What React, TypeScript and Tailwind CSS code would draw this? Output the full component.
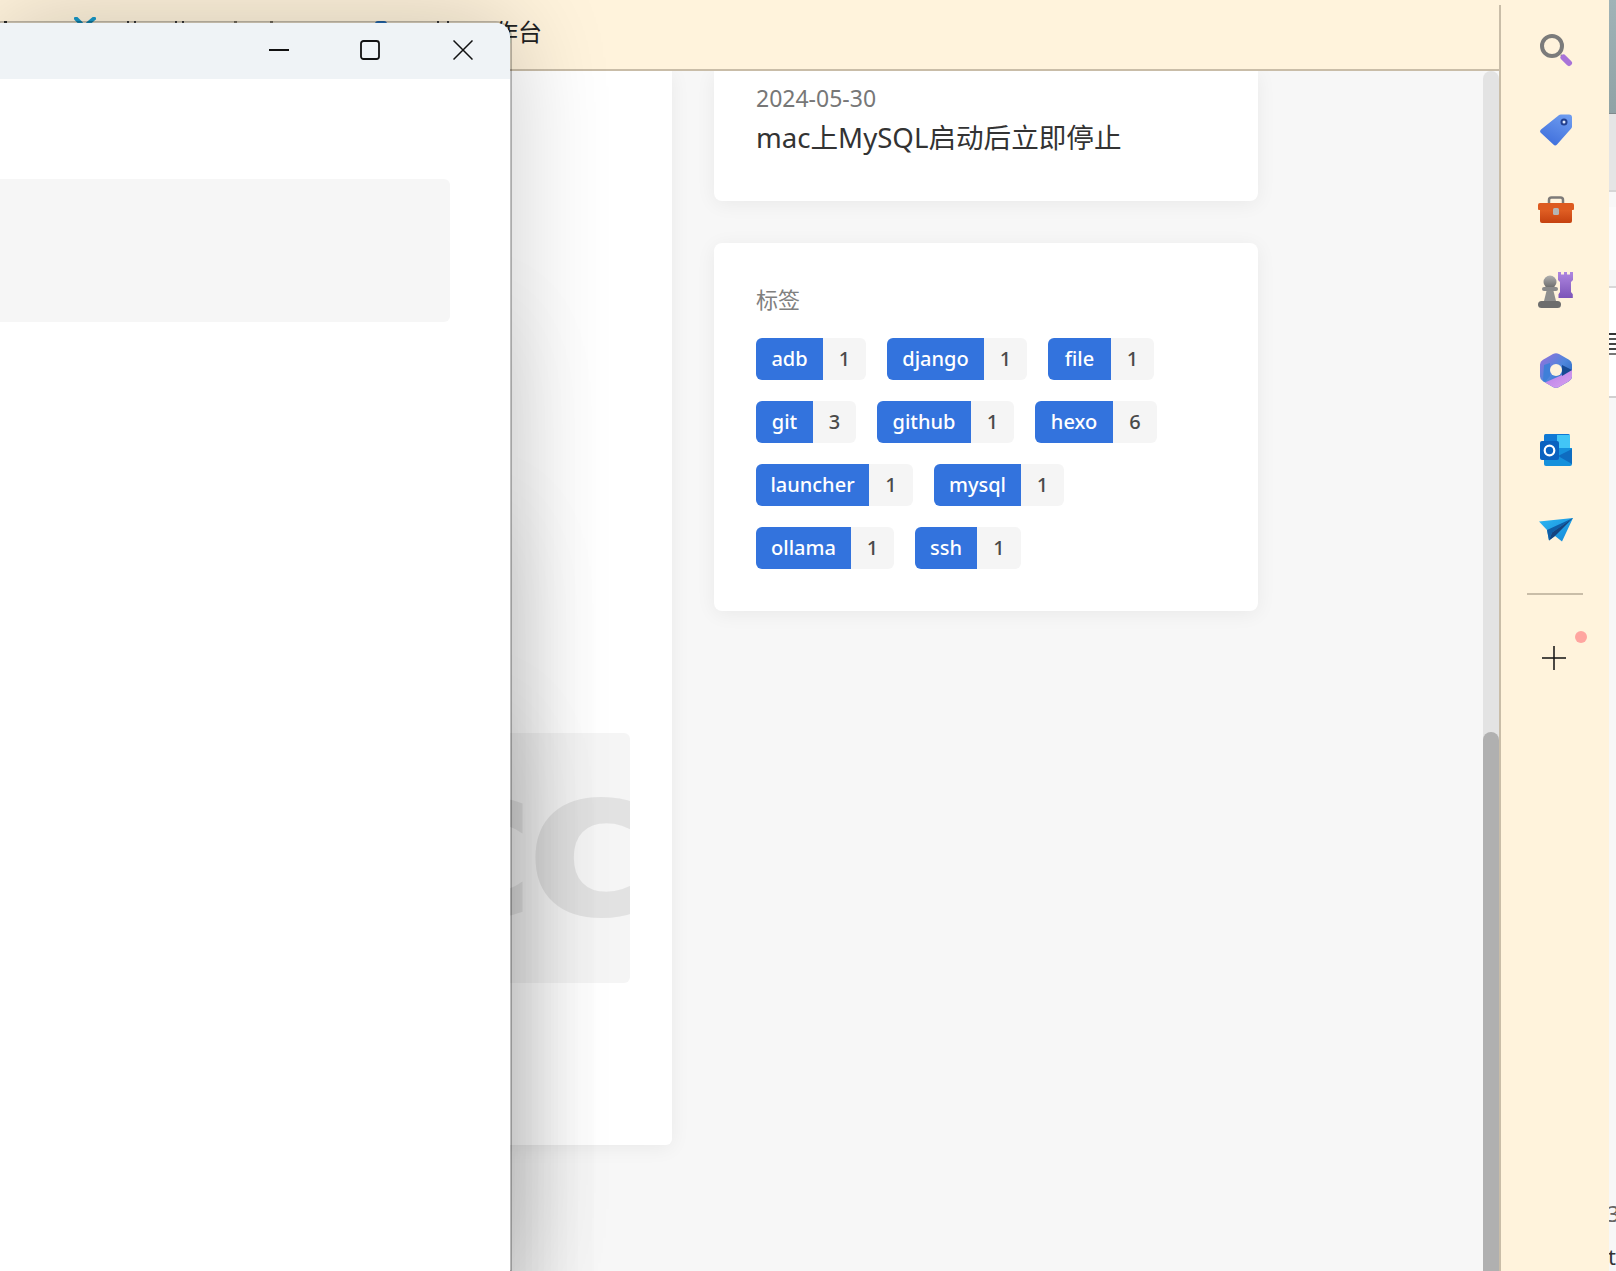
import React from 'react';

const tags = [
  [
    { name: 'adb', count: 1, width: 'w-[67px]', countWidth: 'w-[43px]' },
    { name: 'django', count: 1, width: 'w-[97px]', countWidth: 'w-[43px]' },
    { name: 'file', count: 1, width: 'w-[63px]', countWidth: 'w-[43px]' },
  ],
  [
    { name: 'git', count: 3, width: 'w-[57px]', countWidth: 'w-[43px]' },
    { name: 'github', count: 1, width: 'w-[94px]', countWidth: 'w-[43px]' },
    { name: 'hexo', count: 6, width: 'w-[78px]', countWidth: 'w-[44px]' },
  ],
  [
    { name: 'launcher', count: 1, width: 'w-[113px]', countWidth: 'w-[44px]' },
    { name: 'mysql', count: 1, width: 'w-[87px]', countWidth: 'w-[43px]' },
  ],
  [
    { name: 'ollama', count: 1, width: 'w-[95px]', countWidth: 'w-[43px]' },
    { name: 'ssh', count: 1, width: 'w-[62px]', countWidth: 'w-[44px]' },
  ],
];

const SearchIcon = () => (
  <svg width="34" height="34" viewBox="0 0 34 34">
    <circle cx="13" cy="13" r="10" fill="none" stroke="#7b7b7b" strokeWidth="4" />
    <path d="M22 22l2 2" stroke="#8a8a8a" strokeWidth="2" />
    <path d="M24.5 24.5l5.5 5.5" stroke="#a873d8" strokeWidth="6" strokeLinecap="round" />
  </svg>
);

const TagIcon = () => (
  <svg width="32" height="32" viewBox="0 0 32 32">
    <defs>
      <linearGradient id="tagFill" x1="0.8" y1="0" x2="0.3" y2="1">
        <stop offset="0" stopColor="#6d9bef" />
        <stop offset="1" stopColor="#3f6fdc" />
      </linearGradient>
    </defs>
    <path
      d="M21 0.5h8a3 3 0 0 1 3 3v9a3 3 0 0 1-1 2.2L17 30.5a2.5 2.5 0 0 1-3.6.1L1 19a2.5 2.5 0 0 1 0-3.6L18.800 1.300a3 3 0 0 1 2.200-.8z"
      fill="url(#tagFill)"
    />
    <circle cx="24" cy="8" r="3.500" fill="#23408f" />
    <circle cx="24" cy="8" r="1.500" fill="#dfe8fb" />
  </svg>
);

const ToolboxIcon = () => (
  <svg width="36" height="28" viewBox="0 0 36 28">
    <defs>
      <linearGradient id="boxFill" x1="0" y1="0" x2="0" y2="1">
        <stop offset="0" stopColor="#ec6c2d" />
        <stop offset="1" stopColor="#c5410f" />
      </linearGradient>
    </defs>
    <path d="M11 8V4a2.500 2.500 0 0 1 2.500-2.500h9A2.500 2.500 0 0 1 25 4v4" fill="none" stroke="#7d7a78" strokeWidth="2.500" />
    <rect x="2" y="8" width="32" height="19" rx="2" fill="url(#boxFill)" />
    <path d="M0 9a2 2 0 0 1 2-2h32a2 2 0 0 1 2 2v4a1 1 0 0 1-1 1H1a1 1 0 0 1-1-1z" fill="#dd5a20" />
    <rect x="15" y="12" width="6" height="7" rx="1.500" fill="#b5b5b5" />
  </svg>
);

const ChessIcon = () => (
  <svg width="36" height="36" viewBox="0 0 36 36">
    <defs>
      <linearGradient id="pawnFill" x1="0" y1="0" x2="0" y2="1">
        <stop offset="0" stopColor="#b0b0b0" />
        <stop offset="1" stopColor="#676767" />
      </linearGradient>
      <linearGradient id="rookFill" x1="0" y1="0" x2="0" y2="1">
        <stop offset="0" stopColor="#ae86e0" />
        <stop offset="1" stopColor="#7c54b8" />
      </linearGradient>
    </defs>
    <path d="M20 0h3v2.500h3V0h3v2.500h3V0h3v8l-2 2v10l1.800 2.200V26H20.500v-3.800L22 20V10l-2-2z" fill="url(#rookFill)" />
    <circle cx="12" cy="10" r="6.500" fill="url(#pawnFill)" />
    <rect x="4" y="15" width="16" height="4" rx="2" fill="#8a8a8a" />
    <path d="M8.500 19h7l2.500 10H6z" fill="#8e8e8e" />
    <rect x="0" y="29" width="23" height="7" rx="3.500" fill="#6d6d6d" />
  </svg>
);

const OfficeIcon = () => (
  <svg width="32" height="35" viewBox="0 0 32 35">
    <defs>
      <linearGradient id="hexBase" x1="0" y1="0" x2="1" y2="1">
        <stop offset="0" stopColor="#9a6fdc" />
        <stop offset="0.5" stopColor="#4f86dc" />
        <stop offset="1" stopColor="#1d5fb5" />
      </linearGradient>
      <linearGradient id="hexBottom" x1="0" y1="0" x2="1" y2="1">
        <stop offset="0" stopColor="#b57be8" />
        <stop offset="1" stopColor="#d9a2ee" />
      </linearGradient>
    </defs>
    <path
      d="M13 1a6 6 0 0 1 6 0l10 5.800a5.500 5.500 0 0 1 3 4.700v12a5.500 5.500 0 0 1-3 4.700l-10 5.800a6 6 0 0 1-6 0l-10-5.800a5.500 5.500 0 0 1-3-4.700v-12a5.500 5.500 0 0 1 3-4.700z"
      fill="url(#hexBase)"
    />
    <path d="M5 29.400L22 22l9-5.500 1 1v6a5.500 5.500 0 0 1-3 4.700l-10 5.800a6 6 0 0 1-6 0z" fill="url(#hexBottom)" />
    <path d="M22 12l10 5-10 6z" fill="#174a94" />
    <path d="M10 10v13l-5 6-2-1 1-16z" fill="#3f7fd8" />
    <circle cx="16" cy="17" r="6" fill="#fff3dc" />
  </svg>
);

const OutlookIcon = () => (
  <svg width="32" height="32" viewBox="0 0 32 32">
    <rect x="4" y="0" width="26" height="16" rx="1.500" fill="#0f78d4" />
    <rect x="17" y="1" width="13" height="14" fill="#42c5f6" />
    <path d="M4 14h28v16a2 2 0 0 1-2 2H6a2 2 0 0 1-2-2z" fill="#1590dc" />
    <path d="M32 15v15L18 22z" fill="#0e6cc0" />
    <rect x="0" y="7" width="19" height="19" rx="2" fill="#0a62c0" />
    <circle cx="9.500" cy="16.500" r="4.800" fill="none" stroke="#fff" strokeWidth="2.200" />
  </svg>
);

const PlaneIcon = () => (
  <svg width="34" height="24" viewBox="0 0 34 24">
    <defs>
      <linearGradient id="planeFill" x1="0" y1="0" x2="1" y2="1">
        <stop offset="0" stopColor="#2cb6f2" />
        <stop offset="1" stopColor="#1487d8" />
      </linearGradient>
    </defs>
    <path d="M0 3.500L34 0 23 23.500 16 18 10 22.500 8 12z" fill="url(#planeFill)" />
    <path d="M34 0L8 12l2 10.500 3-8z" fill="#0f5ea8" />
    <path d="M13 14.500L34 0 16 18l-6 4.500z" fill="#15437f" />
  </svg>
);

const sideIcons = [SearchIcon, TagIcon, ToolboxIcon, ChessIcon, OfficeIcon, OutlookIcon, PlaneIcon];

const Sidebar = () => (
  <div className="w-[110px] shrink-0 bg-[#fff3dc]">
    <div className="h-full mt-[5px] border-l-2 border-[#c9bda8] pt-[5px] pl-[2px] flex flex-col items-center">
      {sideIcons.map((Icon, i) => (
        <div key={i} className="h-[80px] w-full flex items-center justify-center">
          <Icon />
        </div>
      ))}
      <div className="w-[56px] h-[2px] bg-[#c9bda8] mt-[23px] -ml-[2px]" />
      <div className="relative w-full flex justify-center mt-[51px] -ml-[4px]">
        <svg width="24" height="24" viewBox="0 0 24 24">
          <path d="M12 0v24M0 12h24" stroke="#111" strokeWidth="1.500" />
        </svg>
        <span className="absolute left-[74px] -top-[15px] w-3 h-3 rounded-full bg-[#ffa5a0]" />
      </div>
    </div>
  </div>
);

const EdgeStrip = () => (
  <div className="w-[7px] shrink-0 flex flex-col overflow-hidden bg-[#f7f7f7] font-['Noto_Sans',sans-serif]">
    <div className="h-[114px] shrink-0 bg-gradient-to-b from-[#a0b3b7] to-[#8fa2a5] border-b border-[#7f8a8c]" />
    <div className="h-[78px] shrink-0 bg-[#e5e5e5] border-b-2 border-[#d6d6d6]" />
    <div className="h-[15px] shrink-0 bg-[#f8f8f8]" />
    <div className="h-[63px] shrink-0 bg-[#fbfbfb]" />
    <div className="h-[18px] shrink-0 bg-[#f6f6f6] border-b-2 border-[#d8d8d8]" />
    <div className="h-[110px] shrink-0 bg-white border-b-2 border-[#d0d0d0] pt-[45px] flex flex-col gap-[3px]">
      <div className="h-[2px] bg-[#333]" />
      <div className="h-[2px] bg-[#555]" />
      <div className="h-[2px] bg-[#444]" />
      <div className="h-[2px] bg-[#444]" />
      <div className="h-[2px] bg-[#777]" />
    </div>
    <div className="mt-auto mb-[8px] -ml-[2px] text-[22px] leading-[44px] text-[#666] whitespace-nowrap">3</div>
    <div className="text-[22px] -ml-[1px] leading-[26px] mb-[2px] text-[#333] whitespace-nowrap">t</div>
  </div>
);

const FloatingWindow = () => (
  <div className="absolute left-0 top-[21px] bottom-0 w-[512px] bg-white rounded-tr-[16px] border-t-2 border-r-2 border-[#00000040] bg-clip-padding shadow-[0_0_100px_rgba(0,0,0,0.2),0_300px_100px_rgba(0,0,0,0.08),0_500px_100px_rgba(0,0,0,0.09),0_700px_100px_rgba(0,0,0,0.09)]">
    <div className="h-[56px] bg-[#eff3f6] rounded-tr-[14px] flex items-center justify-end">
      <svg width="20" height="20" viewBox="0 0 20 20" className="mr-[71px] mt-[-2px]">
        <path d="M0 10h20" stroke="#111" strokeWidth="2" />
      </svg>
      <svg width="20" height="20" viewBox="0 0 20 20" className="mr-[73px] mt-[-2px]">
        <rect x="1" y="1" width="18" height="18" rx="2.500" fill="none" stroke="#111" strokeWidth="1.800" />
      </svg>
      <svg width="20" height="20" viewBox="0 0 20 20" className="mr-[37px] mt-[-2px]">
        <path d="M0.500 0.500l19 19M19.500 0.500l-19 19" stroke="#111" strokeWidth="1.500" />
      </svg>
    </div>
    <div className="w-[450px] h-[143px] mt-[100px] bg-[#f6f6f6] rounded-r-[6px]" />
  </div>
);

const TopBar = () => (
  <div className="h-[71px] shrink-0 bg-[#fff3dc] border-b-2 border-[#c9bda8] flex items-start pt-[21px] font-['Noto_Sans_CJK_SC',sans-serif]">
    <span className="ml-[4px] w-[3px] h-[3px] bg-[#333]" />
    <svg width="22" height="8" viewBox="0 0 22 8" className="ml-[67px] -mt-[4px]">
      <path d="M2 1.500l5 5M20 1.500l-6 5" stroke="#1899c9" strokeWidth="4" strokeLinecap="round" />
    </svg>
    <span className="ml-[31px] w-[2px] h-[2px] bg-[#444]" />
    <span className="ml-[5px] w-[2px] h-[2px] bg-[#444]" />
    <span className="ml-[39px] w-[2px] h-[2px] bg-[#444]" />
    <span className="ml-[5px] w-[2px] h-[2px] bg-[#444]" />
    <span className="ml-[50px] w-[3px] h-[2px] bg-[#8a8070]" />
    <span className="ml-[33px] w-[3px] h-[2px] bg-[#8a8070]" />
    <span className="ml-[102px] w-[12px] h-[3px] rounded-t-full bg-[#2a78c8]" />
    <span className="ml-[50px] w-[2px] h-[2px] bg-[#444]" />
    <span className="ml-[8px] w-[2px] h-[2px] bg-[#444]" />
    <span className="ml-[21px] -mt-[2px] text-[24px] leading-[24px] text-[#222] whitespace-nowrap">工作台</span>
  </div>
);

const LeftCard = () => (
  <div className="w-[672px] h-[1074px] shrink-0 bg-white rounded-br-[6px] shadow-[0_3px_20px_rgba(0,0,0,0.06)] pt-[662px] pl-[40px]">
    <div className="w-[590px] h-[250px] bg-[#f5f5f5] rounded-[6px] overflow-hidden flex items-center">
      <span className="ml-[372px] text-[210px] leading-none font-bold tracking-[-10px] text-[#e2e2e2] font-['DejaVu_Sans',sans-serif] whitespace-nowrap -mt-[30px]">
        cc
      </span>
    </div>
  </div>
);

const RightColumn = () => (
  <div className="w-[544px] shrink-0 ml-[42px] flex flex-col gap-[42px]">
    <div className="h-[130px] bg-white rounded-b-[8px] shadow-[0_3px_20px_rgba(0,0,0,0.06)] pl-[42px] pt-[11px]">
      <div className="text-[23px] leading-[32px] text-[#777]">2024-05-30</div>
      <div className="mt-[3px] text-[27.6px] leading-[40px] text-[#333] font-['Noto_Sans','Noto_Sans_CJK_SC',sans-serif]">
        mac上MySQL启动后立即停止
      </div>
    </div>
    <div className="h-[368px] bg-white rounded-[8px] shadow-[0_3px_20px_rgba(0,0,0,0.06)] pl-[42px] pt-[39px]">
      <div className="text-[22px] leading-[32px] text-[#808080] mb-[24px] font-['Noto_Sans_CJK_SC',sans-serif]">标签</div>
      <div className="flex flex-col gap-[21px]">
        {tags.map((row, i) => (
          <div key={i} className="flex gap-[21px]">
            {row.map((tag) => (
              <div key={tag.name} className="flex h-[42px] text-[20px] font-medium leading-[42px]">
                <span className={`${tag.width} bg-[#3373dd] text-white text-center rounded-l-[6px]`}>{tag.name}</span>
                <span className={`${tag.countWidth} bg-[#f5f5f5] text-[#4a4a4a] text-center rounded-r-[6px]`}>{tag.count}</span>
              </div>
            ))}
          </div>
        ))}
      </div>
    </div>
  </div>
);

const Scrollbar = () => (
  <div className="w-[16px] shrink-0 ml-auto bg-[#e3e3e3] rounded-t-full flex flex-col">
    <div className="mt-[661px] flex-1 bg-[#b0b0b0] rounded-t-full" />
  </div>
);

export default function App() {
  return (
    <div className="relative flex h-screen w-full overflow-hidden bg-[#f7f7f7] font-['Noto_Sans',sans-serif]">
      <div className="flex-1 min-w-0 flex flex-col">
        <TopBar />
        <div className="flex-1 min-h-0 flex overflow-hidden">
          <LeftCard />
          <RightColumn />
          <Scrollbar />
        </div>
      </div>
      <Sidebar />
      <EdgeStrip />
      <FloatingWindow />
    </div>
  );
}
